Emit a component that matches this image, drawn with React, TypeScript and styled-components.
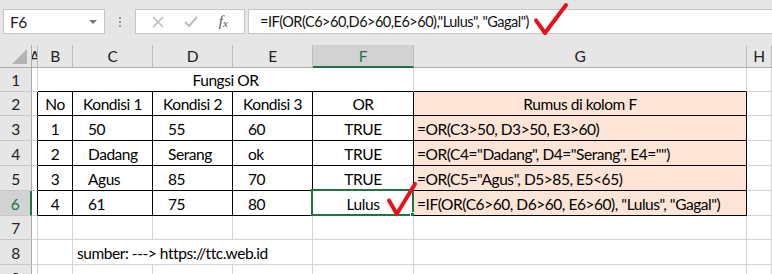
import React from "react";
import styled, { createGlobalStyle } from "styled-components";

const GREEN = "#217346";
const GRID = "#d4d4d4";
const INK = "#000";
const PEACH = "#fce4d6";

const Global = createGlobalStyle`
  html, body { margin: 0; padding: 0; background: #fff; overflow: hidden; }
  body { font-family: Lato, "Liberation Sans", sans-serif; }
`;

const Page = styled.div`
  width: 772px;
  height: 274px;
  overflow: hidden;
  background: #e6e6e6;
`;

const Bar = styled.div`
  display: flex;
  align-items: flex-start;
  height: 45px;
  box-sizing: border-box;
  padding: 9px 0 0 3px;
  font-size: 15.5px;
  letter-spacing: -0.4px;
`;

const NameBox = styled.div`
  width: 102px;
  height: 25px;
  box-sizing: border-box;
  background: #fff;
  border: 1px solid #c6c6c6;
  display: flex;
  align-items: center;
  justify-content: space-between;
  padding: 0 7px 0 6px;
  color: #222;
`;

const Caret = styled.span`
  width: 0;
  height: 0;
  border-left: 4px solid transparent;
  border-right: 4px solid transparent;
  border-top: 4px solid #777;
`;

const Grip = styled.div`
  width: 30px;
  height: 25px;
  display: flex;
  flex-direction: column;
  align-items: center;
  justify-content: center;
  gap: 2px;
  span { width: 2px; height: 2px; background: #9a9a9a; }
`;

const FnBox = styled.div`
  width: 110px;
  height: 25px;
  box-sizing: border-box;
  background: #fff;
  border: 1px solid #c6c6c6;
  display: flex;
  align-items: center;
  justify-content: space-around;
  padding: 0 6px;
  margin-right: 3px;
`;

const Fx = styled.span`
  font-family: "Liberation Serif", serif;
  font-style: italic;
  font-size: 15px;
  letter-spacing: 0;
  color: #555;
  sub { font-size: 11px; vertical-align: -1px; }
`;

const Formula = styled.div`
  flex: 1;
  height: 25px;
  box-sizing: border-box;
  background: #fff;
  border: 1px solid #c6c6c6;
  border-right: none;
  display: flex;
  align-items: center;
  padding-left: 11px;
  color: #111;
  font-size: 14.5px;
  letter-spacing: -0.5px;
  white-space: nowrap;
  overflow: visible;
  position: relative;
`;

const Sheet = styled.div`
  display: grid;
  grid-template-columns: 32px 6px 35px 80px 80px 80px 101px 333px 25px;
  grid-template-rows: 23px 24px 24px 25px 25px 25px 25px 24px 25px 25px;
  background: #fff;
  font-size: 15.5px;
  letter-spacing: -0.45px;
  color: #000;
`;

const Corner = styled.div`
  background: #e6e6e6;
  border-right: 1px solid #ababab;
  border-bottom: 1px solid #ababab;
  position: relative;
  &::after {
    content: "";
    position: absolute;
    right: 4px;
    bottom: 3px;
    border-left: 15px solid transparent;
    border-bottom: 15px solid #b4b4b4;
  }
`;

const ColHead = styled.div<{ $sel?: boolean }>`
  background: ${(p) => (p.$sel ? "#d2d2d2" : "#e6e6e6")};
  color: ${(p) => (p.$sel ? GREEN : "#222")};
  border-right: 1px solid #bcbcbc;
  border-bottom: ${(p) => (p.$sel ? `2px solid ${GREEN}` : "1px solid #ababab")};
  display: flex;
  align-items: center;
  justify-content: center;
  overflow: hidden;
  white-space: nowrap;
`;

const RowHead = styled.div<{ $sel?: boolean }>`
  background: ${(p) => (p.$sel ? "#d2d2d2" : "#e6e6e6")};
  color: ${(p) => (p.$sel ? GREEN : "#222")};
  border-right: ${(p) => (p.$sel ? `2px solid ${GREEN}` : "1px solid #ababab")};
  border-bottom: 1px solid #c8c8c8;
  display: flex;
  align-items: center;
  justify-content: center;
  padding-top: 1px;
  box-sizing: border-box;
`;

const Cell = styled.div<{
  $r: string;
  $b: string;
  $bg?: string;
  $align?: "left" | "center";
  $pad?: number;
  $span?: number;
}>`
  grid-column: span ${(p) => p.$span ?? 1};
  background: ${(p) => p.$bg ?? "#fff"};
  border-right: 1px solid ${(p) => p.$r};
  border-bottom: 1px solid ${(p) => p.$b};
  display: flex;
  align-items: center;
  justify-content: ${(p) => (p.$align === "center" ? "center" : "flex-start")};
  padding: 1px 0 0 ${(p) => p.$pad ?? 0}px;
  box-sizing: border-box;
  white-space: nowrap;
  position: relative;
  min-width: 0;
`;

const Selection = styled.div`
  position: absolute;
  left: -2px;
  top: -2px;
  right: -1px;
  bottom: -1px;
  border: 2px solid ${GREEN};
  pointer-events: none;
  &::after {
    content: "";
    position: absolute;
    right: -5px;
    bottom: -5px;
    width: 5px;
    height: 5px;
    background: ${GREEN};
    border: 1px solid #fff;
  }
`;

const CellTick = styled.svg`
  position: absolute;
  left: 76px;
  top: -7px;
  overflow: visible;
  z-index: 2;
`;

const BarTick = styled.svg`
  margin-left: 7px;
  margin-top: -6px;
  overflow: visible;
`;

type Spec = { text?: string; align?: "left" | "center"; pad?: number; span?: number };

const COLS = ["A", "B", "C", "D", "E", "F", "G", "H"];

const rows: Record<number, (Spec | null)[]> = {
  1: [{}, { text: "Fungsi OR", align: "center", span: 5 }, null, null, null, null, {}, {}],
  2: [{}, { text: "No", align: "center" }, { text: "Kondisi 1", align: "center" }, { text: "Kondisi 2", align: "center" }, { text: "Kondisi 3", align: "center" }, { text: "OR", align: "center" }, { text: "Rumus di kolom F", align: "center" }, {}],
  3: [{}, { text: "1", align: "center" }, { text: "50", pad: 15 }, { text: "55", pad: 15 }, { text: "60", pad: 15 }, { text: "TRUE", align: "center" }, { text: "=OR(C3>50, D3>50, E3>60)", pad: 3 }, {}],
  4: [{}, { text: "2", align: "center" }, { text: "Dadang", pad: 15 }, { text: "Serang", pad: 15 }, { text: "ok", pad: 15 }, { text: "TRUE", align: "center" }, { text: '=OR(C4="Dadang", D4="Serang", E4="")', pad: 3 }, {}],
  5: [{}, { text: "3", align: "center" }, { text: "Agus", pad: 15 }, { text: "85", pad: 15 }, { text: "70", pad: 15 }, { text: "TRUE", align: "center" }, { text: '=OR(C5="Agus", D5>85, E5<65)', pad: 3 }, {}],
  6: [{}, { text: "4", align: "center" }, { text: "61", pad: 15 }, { text: "75", pad: 15 }, { text: "80", pad: 15 }, { text: "Lulus", align: "center" }, { text: '=IF(OR(C6>60, D6>60, E6>60), "Lulus", "Gagal")', pad: 3 }, {}],
  7: [{}, {}, {}, {}, {}, {}, {}, {}],
  8: [{}, {}, { text: "sumber: ---> https://ttc.web.id", pad: 4, span: 3 }, null, null, {}, {}, {}],
  9: [{}, {}, {}, {}, {}, {}, {}, {}],
};

function edges(r: number, c: number, span: number) {
  const last = c + span - 1;
  const inTable = r >= 2 && r <= 6;
  const right = inTable && last <= 6 ? INK : GRID;
  const bottom = r >= 1 && r <= 6 && c >= 1 && c <= 6 ? INK : GRID;
  return { right, bottom };
}

const Tick = ({ w, h }: { w: number; h: number }) => (
  <path
    d={`M0 ${h * 0.55} L${w * 0.3} ${h} L${w} 0`}
    fill="none"
    stroke="#e8121a"
    strokeWidth={4}
    strokeLinecap="round"
    strokeLinejoin="round"
  />
);

export default function App() {
  return (
    <Page>
      <Global />
      <Bar>
        <NameBox>
          F6
          <Caret />
        </NameBox>
        <Grip>
          <span />
          <span />
          <span />
        </Grip>
        <FnBox>
          <svg width="12" height="12" viewBox="0 0 12 12">
            <path d="M1 1 L11 11 M11 1 L1 11" stroke="#bdbdbd" strokeWidth="1.6" />
          </svg>
          <svg width="14" height="12" viewBox="0 0 14 12">
            <path d="M1 6 L5 10 L13 1" fill="none" stroke="#bdbdbd" strokeWidth="2" />
          </svg>
          <Fx>
            f<sub>x</sub>
          </Fx>
        </FnBox>
        <Formula>
          =IF(OR(C6&gt;60,D6&gt;60,E6&gt;60),"Lulus", "Gagal")
          <BarTick width="30" height="28" viewBox="0 0 30 28">
            <Tick w={30} h={28} />
          </BarTick>
        </Formula>
      </Bar>

      <Sheet>
        <Corner />
        {COLS.map((l) => (
          <ColHead key={l} $sel={l === "F"}>
            {l}
          </ColHead>
        ))}
        {Object.entries(rows).map(([key, cells]) => {
          const r = Number(key);
          return (
            <React.Fragment key={r}>
              <RowHead $sel={r === 6}>{r}</RowHead>
              {cells.map((spec, c) => {
                if (!spec) return null;
                const span = spec.span ?? 1;
                const { right, bottom } = edges(r, c, span);
                const peach = c === 6 && r >= 2 && r <= 6;
                const active = r === 6 && c === 5;
                return (
                  <Cell
                    key={c}
                    $r={right}
                    $b={bottom}
                    $bg={peach ? PEACH : undefined}
                    $align={spec.align}
                    $pad={spec.pad}
                    $span={span}
                  >
                    {spec.text}
                    {active && (
                      <>
                        <Selection />
                        <CellTick width="26" height="30" viewBox="0 0 26 30">
                          <Tick w={26} h={30} />
                        </CellTick>
                      </>
                    )}
                  </Cell>
                );
              })}
            </React.Fragment>
          );
        })}
      </Sheet>
    </Page>
  );
}
